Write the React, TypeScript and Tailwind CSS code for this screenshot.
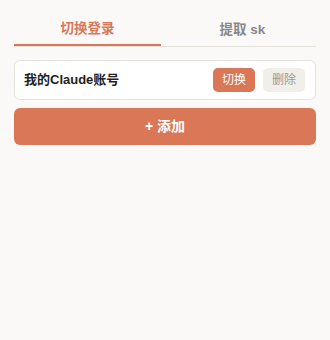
export default function App() {
  return (
    <div
      className="min-h-[340px] w-full bg-[#faf9f7] px-[14px] pt-[15px]"
      style={{ fontFamily: '"Liberation Sans", "Noto Sans CJK SC", sans-serif' }}
    >
      <div className="flex gap-[8px] border-b border-[#e5e2dc]">
        <button className="flex-1 -mb-px h-[31px] border-b-2 border-[#d97757] text-[13.5px] font-bold text-[#d97757]">
          切换登录
        </button>
        <button className="flex-1 h-[31px] text-[13.5px] font-bold text-[#888888]">
          提取 sk
        </button>
      </div>
      <div className="mt-[13px] flex h-[40px] items-center justify-between rounded-[6px] border border-[#e5e2dc] bg-white pl-[9px] pr-[10px]">
        <span className="text-[13px] font-bold text-[#222222]">我的Claude账号</span>
        <div className="flex items-center gap-[8px]">
          <button className="h-[24px] w-[42px] rounded-[5px] bg-[#d97757] text-[12px] text-white">
            切换
          </button>
          <button className="h-[24px] w-[42px] rounded-[5px] bg-[#f0efea] text-[12px] text-[#999999]">
            删除
          </button>
        </div>
      </div>
      <button className="mt-[8px] flex h-[37px] w-full items-center justify-center rounded-[6px] bg-[#d97757] text-[14px] font-bold text-white">
        + 添加
      </button>
    </div>
  );
}
